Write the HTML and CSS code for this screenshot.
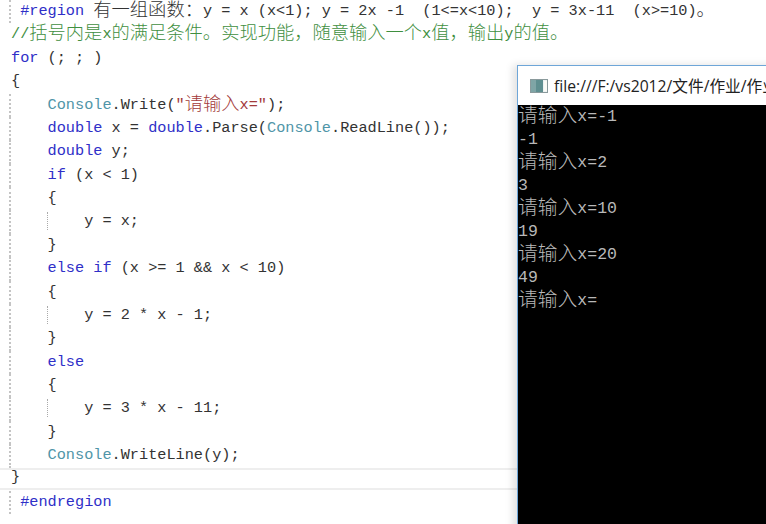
FILE: index.html
```html
<!DOCTYPE html>
<html lang="zh">
<head>
<meta charset="utf-8">
<title>Console</title>
<link rel="stylesheet" href="styles.css">
</head>
<body>
<main class="code">
<div class="line g"> <span class="k">#region</span> <span class="c">有一组函数：</span>y = x (x&lt;1); y = 2x -1  (1&lt;=x&lt;10);  y = 3x-11  (x&gt;=10)<span class="c">。</span></div>
<div class="line cm">//<span class="c">括号内是</span>x<span class="c">的满足条件。实现功能，随意输入一个</span>x<span class="c">值，输出</span>y<span class="c">的值。</span></div>
<div class="line"><span class="k">for</span> (; ; )</div>
<div class="line">{</div>
<div class="line g">    <span class="t">Console</span>.Write(<span class="s">"<span class="c">请输入</span>x="</span>);</div>
<div class="line g">    <span class="k">double</span> x = <span class="k">double</span>.Parse(<span class="t">Console</span>.ReadLine());</div>
<div class="line g">    <span class="k">double</span> y;</div>
<div class="line g">    <span class="k">if</span> (x &lt; 1)</div>
<div class="line g">    {</div>
<div class="line g"><span class="ind"></span>    y = x;</div>
<div class="line g">    }</div>
<div class="line g">    <span class="k">else if</span> (x &gt;= 1 &amp;&amp; x &lt; 10)</div>
<div class="line g">    {</div>
<div class="line g"><span class="ind"></span>    y = 2 * x - 1;</div>
<div class="line g">    }</div>
<div class="line g">    <span class="k">else</span></div>
<div class="line g">    {</div>
<div class="line g"><span class="ind"></span>    y = 3 * x - 11;</div>
<div class="line g">    }</div>
<div class="line g">    <span class="t">Console</span>.WriteLine(y);</div>
<div class="line current">}</div>
<div class="line g"> <span class="k">#endregion</span></div>
</main>
<section class="window">
<header class="titlebar">
<svg class="appicon" width="18" height="14" viewBox="0 0 18 14"><rect x="0.5" y="0.5" width="17" height="13" fill="#eef2f2" stroke="#8a9a9c"/><rect x="1" y="1" width="12" height="12" fill="#5f8f90"/><rect x="1" y="1" width="5" height="12" fill="#7fa5a6"/><rect x="14" y="2" width="3" height="10" fill="#fbfbf6"/></svg>
<span class="titletext">file:///F:/vs2012/文件/作业/作业1/bin/Debug/作业1.EXE</span>
</header>
<div class="console">
<div><span class="cc">请输入</span>x=-1</div>
<div>-1</div>
<div><span class="cc">请输入</span>x=2</div>
<div>3</div>
<div><span class="cc">请输入</span>x=10</div>
<div>19</div>
<div><span class="cc">请输入</span>x=20</div>
<div>49</div>
<div><span class="cc">请输入</span>x=</div>
</div>
</section>
</body>
</html>
```
FILE: styles.css
```css
html, body {
  margin: 0;
  height: 524px;
  overflow: hidden;
  background: #fff;
}
body {
  position: relative;
  width: 766px;
}
.code {
  padding-left: 9px;
  font-family: "Liberation Mono", monospace;
  font-size: 15.24px;
  color: #333;
}
.line {
  height: 23.38px;
  line-height: 23.38px;
  white-space: pre;
  border-left: 2px solid transparent;
  box-sizing: border-box;
}
.line.g {
  border-left: 2px dotted #c4c4c4;
}
.line.current {
  box-shadow: 0 -2px 0 #eee, 0 2px 0 #eee;
  height: 18px;
  margin: 2.4px 0 3px -9px;
  padding-left: 9px;
  line-height: 15px;
  width: 520px;
}
.c {
  font-family: "Noto Sans CJK SC", sans-serif;
  font-size: 18.28px;
  font-weight: 300;
  line-height: 0;
  vertical-align: -1px;
}
.k { color: #2f2fc8; }
.t { color: #4f95a8; }
.s { color: #a33a3a; }
.cm { color: #3f8f3f; }
.ind {
  display: inline-block;
  width: 36.6px;
  height: 18px;
  box-sizing: border-box;
  border-right: 1px dotted #aaa;
  vertical-align: top;
  margin-top: 2px;
}
.window {
  position: absolute;
  left: 517px;
  top: 65px;
  width: 300px;
  height: 480px;
  display: flex;
  flex-direction: column;
  border: 1px solid #6ea6d8;
  border-width: 1px 0 0 1px;
  box-shadow: -4px 0 8px rgba(0, 0, 0, 0.12);
  background: #fff;
}
.titlebar {
  height: 39px;
  display: flex;
  align-items: center;
  gap: 6px;
  padding-left: 12px;
  white-space: nowrap;
  font-family: "Open Sans", "Noto Sans CJK SC", sans-serif;
  font-size: 15.7px;
  color: #222;
}
.appicon { flex: none; }
.console {
  flex: 1;
  background: #000;
  color: #b8b8b8;
  font-family: "Liberation Mono", monospace;
  font-size: 16.5px;
  line-height: 23px;
}
.cc {
  font-family: "Noto Sans CJK SC", sans-serif;
  font-size: 19.8px;
  font-weight: 300;
  line-height: 0;
  vertical-align: -1px;
}
```
